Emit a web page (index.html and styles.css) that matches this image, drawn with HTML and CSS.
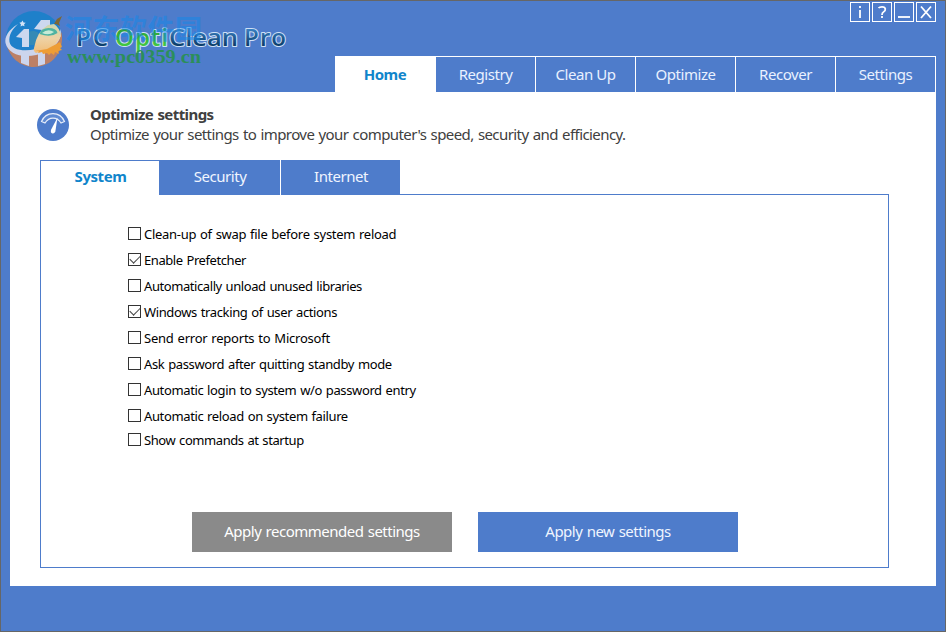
FILE: index.html
```html
<!DOCTYPE html>
<html lang="en">
<head>
<meta charset="utf-8">
<title>PC OptiClean Pro</title>
<link rel="stylesheet" href="styles.css">
</head>
<body>
<div class="window">
  <header class="header">
    <svg class="logo" width="300" height="80" viewBox="0 0 300 80" role="img" aria-label="PC OptiClean Pro">
      <defs>
        <linearGradient id="navy" x1="0" y1="0" x2="0" y2="1"><stop offset=".25" stop-color="#3c83c6"/><stop offset=".75" stop-color="#0d3f6c"/></linearGradient>
        <linearGradient id="green" x1="0" y1="0" x2="0" y2="1"><stop offset=".25" stop-color="#2f9f35"/><stop offset=".8" stop-color="#43c943"/></linearGradient>
        <linearGradient id="brush" x1="0" y1="0" x2="0" y2="1"><stop offset="0" stop-color="#c9d6b0"/><stop offset=".5" stop-color="#eed2a5"/><stop offset="1" stop-color="#f0bd78"/></linearGradient>
      </defs>
      <circle cx="34" cy="39" r="28" fill="#1e80ca"/>
      <path d="M6.500 44C14 56 34 54 46 47c8-4 13-9 15.500-15C65 52 52 67 34 67 20 67 9 57 6.500 44z" fill="#bc8066"/>
      <path d="M26 37q1-7 8-6 8 1 6 14H27q-3-4-1-8z" fill="#4994a2" opacity=".5"/>
      <path d="M18 24C8 30 4.500 37 5.500 43c3 13 22 17 40 9 11-5 17-14 15-23-1 7-6 12-14 16-15 8-35 7-37-3-1-7 3-13 8.500-18z" fill="#ccd5ed"/>
      <path d="M16 37l8-8h5v18h-7V38zM34 29l7-9h9v24l-8 3V30z" fill="#ccd8ef"/>
      <path d="M21 54h8v12l-8-3zM38 53h7v11l-7 2z" fill="#ccd5ed"/>
      <path d="M22.500 20.500l1 2 2.200.2-1.600 1.500.4 2.100-2-.9-1.900 1 .3-2.200-1.500-1.400 2-.5z" fill="#d4e4f7"/>
      <path d="M34 48q3-17 14-23l6-1q6 4 7 12-4 9-13 13l-12 4q-3-2-2-5z" fill="url(#brush)"/>
      <path d="M39.500 34q2-6 9-6 8 0 9 5-7 5-18 1z" fill="#4db3a2"/>
      <path d="M42 33q6-5 12-1-5 4-12 1z" fill="#c6ead6"/>
      <path d="M54 24l3-5 5-3-3 7 1 3-4-2z" fill="#7c6835"/>
      <path d="M35 51l12-2 13-7 2 5-2 1 2 2-4 1 1 3-4-2-1 3-3-2-2 2-2-2-4 1-1-2-4 1 1-2z" fill="#ee9d35"/>
      <g class="brand">
        <text x="76" y="46" textLength="32" fill="url(#navy)">PC</text>
        <text x="115" y="46" textLength="53" fill="url(#green)">Opti</text>
        <text x="169" y="46" textLength="69" lengthAdjust="spacingAndGlyphs" fill="url(#navy)">Clean</text>
        <text x="244" y="46" textLength="42" fill="url(#navy)">Pro</text>
      </g>
      <text class="mark-name" x="65" y="39" textLength="137" lang="zh">河东软件园</text>
      <text class="mark-url" x="67" y="63" textLength="134" lengthAdjust="spacingAndGlyphs">www.pc0359.cn</text>
    </svg>
    <div class="header-side">
      <div class="controls">
        <svg width="20" height="20"><rect x=".5" y=".5" width="19" height="19"/><path class="thick" d="M10 8v8"/><path class="thick" d="M10 4v2"/></svg>
        <svg width="20" height="20"><rect x=".5" y=".5" width="19" height="19"/><path class="thick" d="M6.500 6Q7.500 4.800 10 4.800c4.300 0 4 4 1.500 5.200Q10 10.800 10 13M10 14v2"/></svg>
        <svg width="20" height="20"><rect x=".5" y=".5" width="19" height="19"/><path class="thick" d="M4 15h12"/></svg>
        <svg width="20" height="20"><rect x=".5" y=".5" width="19" height="19"/><path class="thick" d="M5 4.500l10 11.500M15 4.500L5 16"/></svg>
      </div>
      <nav class="nav">
        <a class="nav-tab active">Home</a><a class="nav-tab">Registry</a><a class="nav-tab">Clean Up</a><a class="nav-tab">Optimize</a><a class="nav-tab">Recover</a><a class="nav-tab">Settings</a>
      </nav>
    </div>
  </header>
  <main class="content">
    <div class="intro">
      <svg width="32" height="32" viewBox="0 0 32 32">
        <circle cx="16" cy="16" r="16" fill="#4e7ccb"/>
        <path d="M4.500 12.500C9 2 23 2 27.500 12.500l-3.500 1.500C20 7.500 12 7.500 8 14z" fill="#5f8ad2" stroke="#e6edf9" stroke-width="1.200"/>
        <path d="M20.500 8.500L14.200 20.500q-1 3 .8 3.800 2 .8 3.300-1.500z" fill="#fff"/>
      </svg>
      <div class="intro-text">
        <h1>Optimize settings</h1>
        <p>Optimize your settings to improve your computer's speed, security and efficiency.</p>
      </div>
    </div>
    <nav class="sub-tabs">
      <a class="sub-tab active">System</a><a class="sub-tab">Security</a><a class="sub-tab">Internet</a>
    </nav>
    <section class="panel">
      <ul class="options">
        <li class="loose"><i class="box"></i><span>Clean-up of swap file before system reload</span></li>
        <li class="close"><i class="box checked"></i><span>Enable Prefetcher</span></li>
        <li class="close"><i class="box"></i><span>Automatically unload unused libraries</span></li>
        <li><i class="box checked"></i><span>Windows tracking of user actions</span></li>
        <li class="looser"><i class="box"></i><span>Send error reports to Microsoft</span></li>
        <li><i class="box"></i><span>Ask password after quitting standby mode</span></li>
        <li><i class="box"></i><span>Automatic login to system w/o password entry</span></li>
        <li class="tight"><i class="box"></i><span>Automatic reload on system failure</span></li>
        <li class="close"><i class="box"></i><span>Show commands at startup</span></li>
      </ul>
      <div class="actions">
        <button class="muted">Apply recommended settings</button>
        <button>Apply new settings</button>
      </div>
    </section>
  </main>
</div>
</body>
</html>
```
FILE: styles.css
```css
* { box-sizing: border-box; }
body { margin: 0; font-family: "Noto Sans", "Open Sans", sans-serif; }
.window {
  width: 946px; height: 632px; padding: 0 9px;
  border: 1px solid #666; background: #4e7ccb;
}
.header { display: flex; height: 91px; justify-content: space-between; }
.logo { display: block; margin: -1px 0 0 -10px; }
.brand text {
  font: 600 24px "Open Sans", sans-serif;
  stroke: #cfe0f6; stroke-width: 2px; stroke-linejoin: round; paint-order: stroke;
}
.mark-name { font: bold 27px "Noto Sans CJK SC", sans-serif; fill: #1688e8; opacity: .55; }
.mark-url { font: bold 18px "Liberation Serif", serif; fill: #28914f; opacity: .9; }
.header-side { display: flex; flex-direction: column; justify-content: space-between; align-items: flex-end; }
.controls { display: flex; gap: 2px; margin-top: 1px; }
.controls svg { fill: none; stroke: #fff; stroke-width: 1; }
.controls .thick { stroke-width: 1.800; }
.nav { display: flex; height: 36px; border-top: 1px solid #fff; }
.nav-tab {
  width: 100px; border-right: 1px solid #fff; color: #e9f1ff;
  font-size: 15px; letter-spacing: -.45px; line-height: 35px; text-align: center;
}
.nav-tab.active { width: 101px; background: #fff; color: #1085cb; font-weight: bold; }
.content { height: 494px; padding: 17px 0 0 27px; background: #fff; }
.intro { display: flex; height: 51px; gap: 21px; }
.intro-text { margin-top: -5px; color: #404040; font-size: 15px; letter-spacing: -.58px; word-spacing: .9px; white-space: nowrap; }
h1, p { margin: 0; line-height: 20px; }
h1 { font-size: 15px; letter-spacing: -.58px; }
.sub-tabs { display: flex; height: 35px; margin-left: 3px; position: relative; }
.sub-tab {
  width: 119px; background: #4e7ccb; color: #f0f5ff;
  font-size: 15px; letter-spacing: -.45px; line-height: 33px; padding-left: 1px; text-align: center;
}
.sub-tab.active { width: 119px; border: 1px solid #4e7ccb; border-width: 1px 0 0 1px; background: #fff; color: #1085cb; font-weight: bold; line-height: 31px; }
.sub-tab:nth-child(2) { width: 122px; border-right: 1px solid #fff; }
.panel { width: 849px; height: 374px; margin: -1px 0 0 3px; padding: 32px 0 0 87px; border: 1px solid #4e7ccb; }
.options { height: 285px; margin: 0; padding: 0; list-style: none; font-size: 13px; }
.options li { display: flex; height: 26px; gap: 3px; color: #000; letter-spacing: -.37px; word-spacing: .8px; }
.options .tight { height: 24px; }
.options .loose { letter-spacing: -.29px; }
.options .looser { letter-spacing: -.23px; }
.options .close { letter-spacing: -.42px; }
.options span { line-height: 15px; white-space: nowrap; }
.box { position: relative; width: 13px; height: 13px; border: 1px solid #333; }
.checked::after {
  content: ""; position: absolute; left: 1px; top: 1px; width: 9px; height: 5px;
  border: solid #444; border-width: 0 0 1.500px 1.500px; transform: rotate(-45deg);
}
.actions { display: flex; gap: 26px; margin-left: 64px; }
button {
  width: 260px; height: 40px; padding: 0 0 2px; border: 0; background: #4e7ccb;
  color: #eff5ff; font: 15px "Noto Sans", sans-serif; letter-spacing: -.5px; word-spacing: .9px;
}
button.muted { background: #8a8a8a; color: #fff; }
```
